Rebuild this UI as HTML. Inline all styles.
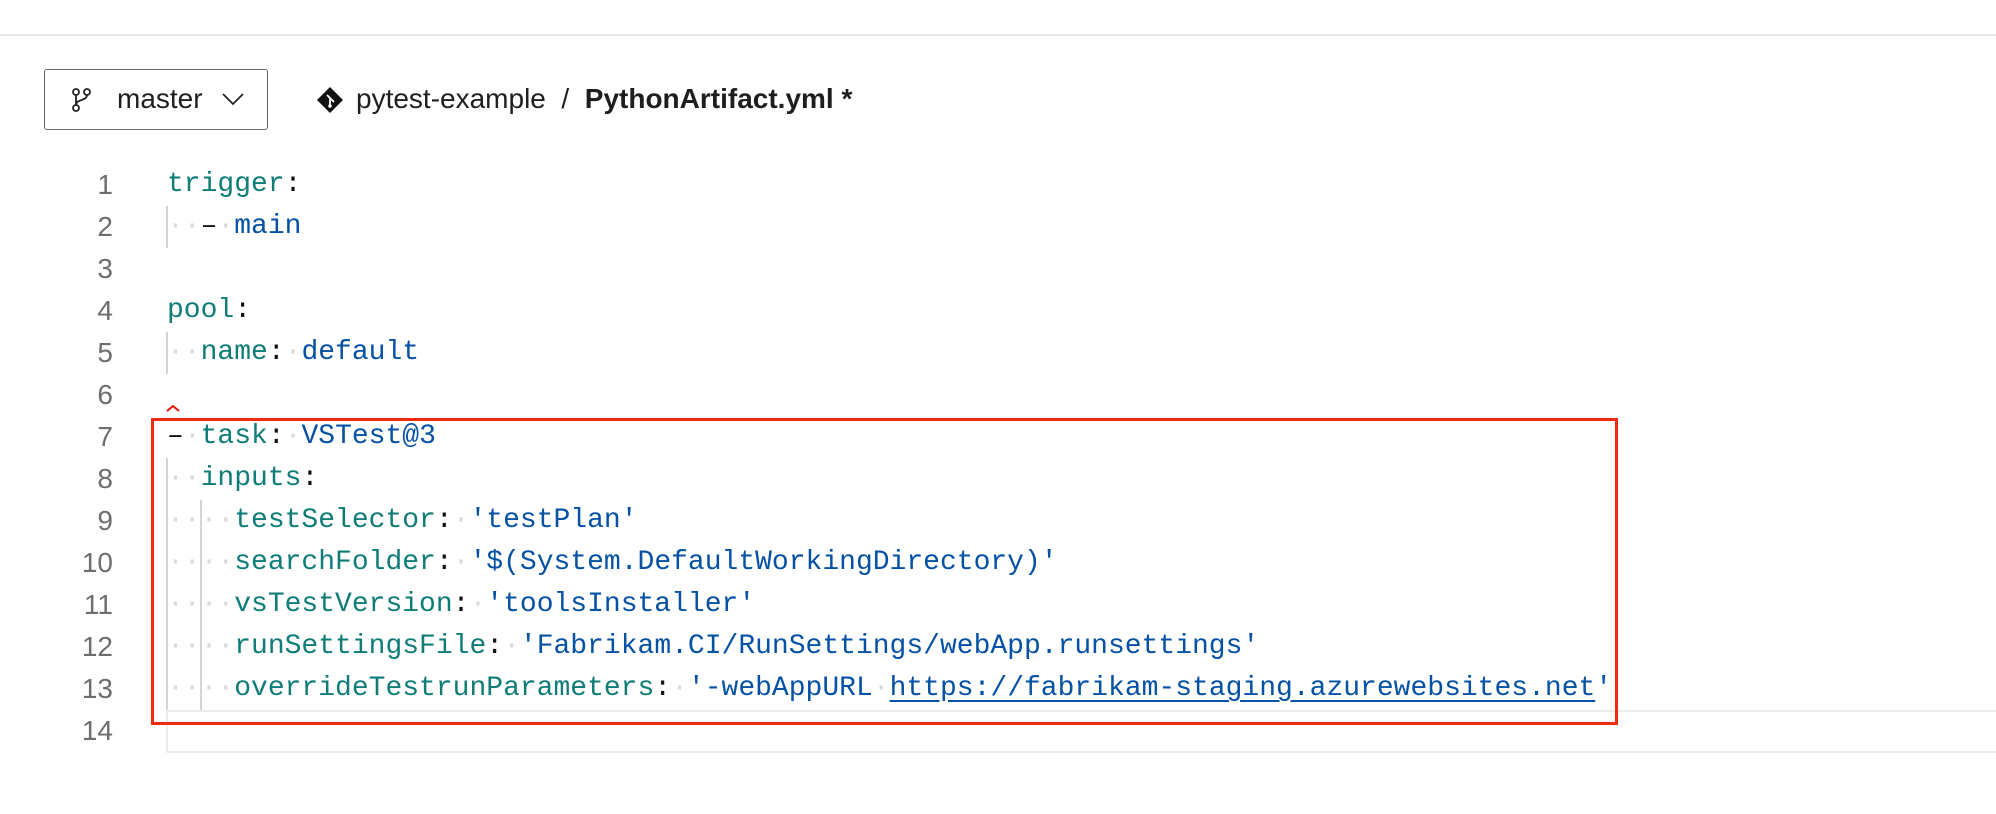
<!DOCTYPE html>
<html><head><meta charset="utf-8"><style>
body{margin:0;width:1996px;height:814px;background:#fff;position:relative;overflow:hidden;font-family:"Liberation Sans",sans-serif}
.top{position:absolute;left:0;top:34px;width:1996px;height:2px;background:#e8e8e8}
.btn{position:absolute;left:44px;top:69px;width:224px;height:61px;border:1.5px solid #6a6a6a;border-radius:3px;box-sizing:border-box}
.t{position:absolute;font-size:28px;color:#1e1e1e;white-space:nowrap}
.ln{position:absolute;left:60px;width:53px;text-align:right;font-size:28px;color:#6e6e6e;line-height:42px}
.code{position:absolute;left:167px;font-family:"Liberation Mono",monospace;font-size:28px;line-height:42px;white-space:pre;color:#111}
.k{color:#0e7d78}.v{color:#0451a5}.d{color:#dadada}
.g{position:absolute;width:2px;background:#d4d4d4}
.cur{position:absolute;left:166px;top:710px;width:1840px;height:39px;border:2px solid #ececec;border-right:none}
.box{position:absolute;left:151px;top:418px;width:1467px;height:307px;border:3px solid #f02a0c;box-sizing:border-box}
</style></head><body>
<div class="top"></div>
<div class="btn"></div>
<svg style="position:absolute;left:71px;top:88px" width="26" height="24" viewBox="0 0 26 24" fill="none" stroke="#222" stroke-width="1.8"><circle cx="5" cy="4" r="3"/><circle cx="16" cy="4" r="3"/><circle cx="5" cy="20" r="3"/><path d="M5 7v10M16 7c0 6-11 4-11 10"/></svg>
<div class="t" style="left:117px;top:83px">master</div>
<svg style="position:absolute;left:221px;top:92px" width="24" height="14" viewBox="0 0 24 14" fill="none" stroke="#222" stroke-width="1.8"><path d="M2 2l10 10 10-10"/></svg>
<svg style="position:absolute;left:317px;top:87px" width="26" height="26" viewBox="0 0 26 26"><path d="M13 0L26 13 13 26 0 13z" fill="#111"/><path d="M10 8l3 3v8M13 11l4 4" stroke="#fff" stroke-width="1.8" fill="none"/><circle cx="13" cy="19" r="1.8" fill="#fff"/></svg>
<div class="t" style="left:356px;top:83px">pytest-example &nbsp;/&nbsp; <b>PythonArtifact.yml *</b></div>

<div class="ln" style="top:164px">1<br>2<br>3<br>4<br>5<br>6<br>7<br>8<br>9<br>10<br>11<br>12<br>13<br>14</div>
<div class="cur"></div>
<div class="g" style="left:166px;top:206px;height:42px"></div>
<div class="g" style="left:166px;top:332px;height:42px"></div>
<div class="g" style="left:166px;top:458px;height:252px"></div>
<div class="g" style="left:200px;top:500px;height:210px"></div>
<div class="code" style="top:164px"><span class="k">trigger</span>:
<span class="d">··</span>–<span class="d">·</span><span class="v">main</span>

<span class="k">pool</span>:
<span class="d">··</span><span class="k">name</span>:<span class="d">·</span><span class="v">default</span>

–<span class="d">·</span><span class="k">task</span>:<span class="d">·</span><span class="v">VSTest@3</span>
<span class="d">··</span><span class="k">inputs</span>:
<span class="d">····</span><span class="k">testSelector</span>:<span class="d">·</span><span class="v">'testPlan'</span>
<span class="d">····</span><span class="k">searchFolder</span>:<span class="d">·</span><span class="v">'$(System.DefaultWorkingDirectory)'</span>
<span class="d">····</span><span class="k">vsTestVersion</span>:<span class="d">·</span><span class="v">'toolsInstaller'</span>
<span class="d">····</span><span class="k">runSettingsFile</span>:<span class="d">·</span><span class="v">'Fabrikam.CI/RunSettings/webApp.runsettings'</span>
<span class="d">····</span><span class="k">overrideTestrunParameters</span>:<span class="d">·</span><span class="v">'-webAppURL</span><span class="d">·</span><span class="v" style="text-decoration:underline;text-underline-offset:5px">https://fabrikam-staging.azurewebsites.net</span><span class="v">'</span>
</div>
<svg style="position:absolute;left:166px;top:404px" width="14" height="8" viewBox="0 0 14 8"><path d="M1 7l6-5 6 5" stroke="#e51400" stroke-width="2" fill="none"/></svg>
<div class="box"></div>
</body></html>
